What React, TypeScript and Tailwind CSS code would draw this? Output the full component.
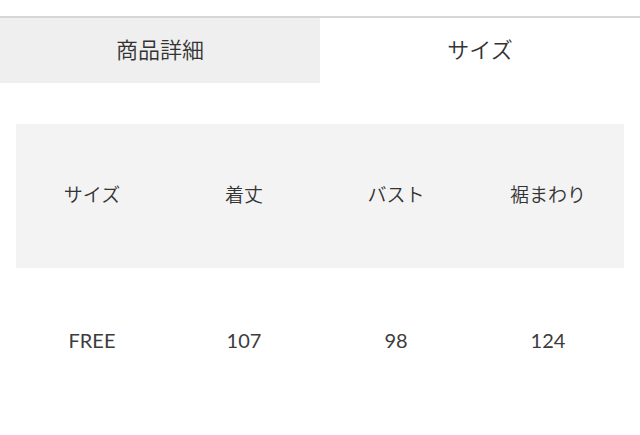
import React from 'react';

const headers = ['サイズ', '着丈', 'バスト', '裾まわり'];
const values = ['FREE', '107', '98', '124'];

const App: React.FC = () => {
  return (
    <div className="w-[640px] h-[435px] bg-white overflow-hidden text-[#333]" style={{ fontFamily: 'Lato, "Noto Sans CJK JP", sans-serif' }}>
      <div className="h-[16px]" />
      <div className="border-t-2 border-[#d6d6d6] flex h-[67px]">
        <div className="w-[320px] bg-[#efefef] flex items-center justify-center pb-[5px] text-[22px] font-['Noto_Sans_CJK_JP'] font-[350] text-[#333]">商品詳細</div>
        <div className="flex-1 bg-white flex items-center justify-center pb-[5px] text-[22px] font-['Noto_Sans_CJK_JP'] font-[350] text-[#333]">サイズ</div>
      </div>

      <div className="mx-[16px] mt-[41px]">
        <div className="grid grid-cols-4 h-[144px] bg-[#f3f3f3] items-center pb-[3px]">
          {headers.map((h) => (
            <div key={h} className="text-center text-[19px] font-['Noto_Sans_CJK_JP'] font-[350] text-[#333]">{h}</div>
          ))}
        </div>
        <div className="grid grid-cols-4 h-[146px] items-center pb-[2px]">
          {values.map((v) => (
            <div key={v} className="text-center text-[20px] font-['Lato'] font-normal text-[#3c3c3c]">{v}</div>
          ))}
        </div>
      </div>
    </div>
  );
};

export default App;
